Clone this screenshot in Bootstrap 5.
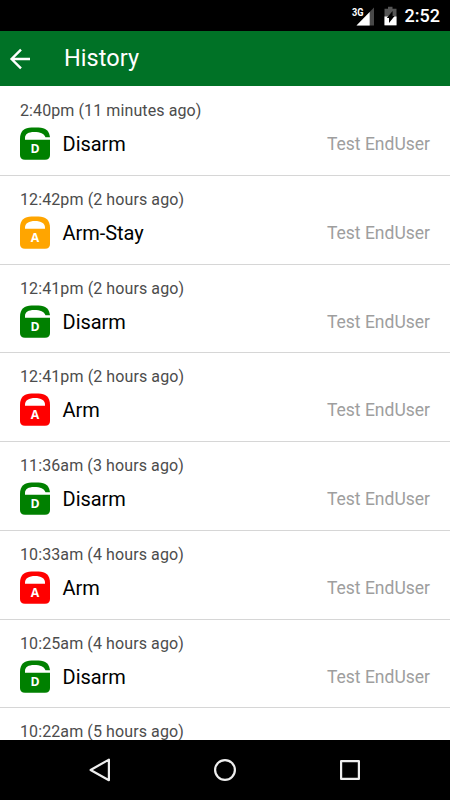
<!DOCTYPE html>
<html lang="en">
<head>
<meta charset="utf-8">
<meta name="viewport" content="width=device-width, initial-scale=1">
<title>History</title>
<link href="https://cdn.jsdelivr.net/npm/bootstrap@5.3.0/dist/css/bootstrap.min.css" rel="stylesheet">
<style>
body { font-family: Roboto, "Liberation Sans", sans-serif; }
svg { display: block; flex: none; }
.status-bar { height: 31px; padding-right: 10px; }
.clock { font-size: 18px; line-height: 33px; font-weight: 500; margin-left: 8px; }
.app-bar { height: 55px; background: #007226; padding-left: 9px; }
.app-title { font-size: 23.5px; line-height: 55px; font-weight: 400; margin-left: 33px; letter-spacing: .05px; }
.history { min-height: 0; padding-top: 1px; }
.entry { height: 88.75px; padding: 14.2px 20px 0; border-bottom: 1.5px solid #d6d6d6; flex: none; }
.entry:last-child { height: auto; border: 0; }
.when { font-size: 16px; line-height: 20px; color: #4c4c4c; letter-spacing: .1px; }
.what { font-size: 20px; line-height: 34.6px; color: #000; margin-left: 12.6px; letter-spacing: -.05px; }
.who { font-size: 17.5px; line-height: 34px; color: #9e9e9e; }
.event-line { margin-top: 6px; }
.nav-keys { height: 60px; }
.nav-keys svg { margin: 0 50.5px; }
</style>
</head>
<body class="vh-100 d-flex flex-column overflow-hidden bg-white">
<header class="flex-shrink-0 text-white">
  <div class="status-bar bg-black d-flex justify-content-end align-items-center">
    <svg width="24" height="20" viewBox="0 0 24 20"><path d="M23 1.5V19.5H5.5Z" fill="#484848"/><path d="M18.7 6V19.5H5.5Z" fill="#fff"/><path d="M0 0H12.5V10H0Z"/><text x="1" y="9.5" font-size="10" font-weight="700" fill="#fff" textLength="11.5" lengthAdjust="spacingAndGlyphs">3G</text></svg>
    <svg width="14" height="20" viewBox="0 0 14 20" class="ms-2"><path d="M5 .8h4.5v2H13.5v16.5H1.5V2.8H5Z" fill="#555"/><path d="M1.5 10.5h12v8.8h-12Z" fill="#fff"/><path d="M9.6 5v5h2L6 17v-5H3.8Z" fill="#000"/></svg>
    <span class="clock">2:52</span>
  </div>
  <div class="app-bar d-flex align-items-center">
    <svg width="22" height="22" viewBox="0 0 22 22" fill="none" stroke="#fff" stroke-width="2.4"><path d="M12 1.7 2.6 11l9.4 9.3M2.4 11H21"/></svg>
    <h1 class="app-title mb-0">History</h1>
  </div>
</header>
<main class="history flex-grow-1 overflow-hidden d-flex flex-column" id="history"></main>
<footer class="nav-keys bg-black d-flex justify-content-center align-items-center flex-shrink-0">
  <svg width="24" height="24" viewBox="0 0 24 24" fill="none" stroke="#eee" stroke-width="2.2" stroke-linejoin="round"><path d="M20.9 1.6v20.6L2.6 12Z"/></svg>
  <svg width="24" height="24" viewBox="0 0 24 24" fill="none" stroke="#eee" stroke-width="2.2"><circle cx="12" cy="12" r="9.9"/></svg>
  <svg width="24" height="24" viewBox="0 0 24 24" fill="none" stroke="#eee" stroke-width="2.2" stroke-linejoin="round"><rect x="3.1" y="3.1" width="17.8" height="17.8"/></svg>
</footer>
<script src="https://cdn.jsdelivr.net/npm/bootstrap@5.3.0/dist/js/bootstrap.bundle.min.js"></script>
<script>
const events = [
  ["2:40pm (11 minutes ago)", "Disarm"],
  ["12:42pm (2 hours ago)", "Arm-Stay"],
  ["12:41pm (2 hours ago)", "Disarm"],
  ["12:41pm (2 hours ago)", "Arm"],
  ["11:36am (3 hours ago)", "Disarm"],
  ["10:33am (4 hours ago)", "Arm"],
  ["10:25am (4 hours ago)", "Disarm"],
  ["10:22am (5 hours ago)"]
];
const colors = { "Disarm": "#008000", "Arm-Stay": "#ffa500", "Arm": "#ff0000" };
function lockIcon(kind) {
  const open = kind === "Disarm";
  const hole = open
    ? '<path d="M5 12.8V11C5 7 8.5 5 14 5C20.5 5 24 6.5 25.5 10.2H30V12.8H5Z" fill="#fff"/>'
    : '<path d="M5 12.8V11.5C5 7.2 9 5 15 5S25 7.2 25 11.5V12.8Z" fill="#fff"/>';
  return `<svg width="30" height="33" viewBox="0 0 30 33"><path d="M0 11.5C0 4 4.5 .4 11.5 .4H18.5C25.5 .4 30 4 30 11.5V28Q30 32.7 25 32.7H5Q0 32.7 0 28Z" fill="${colors[kind]}"/>${hole}<text x="15" y="26.3" text-anchor="middle" font-size="12.3" font-weight="700" fill="#fff" font-family="Open Sans, sans-serif">${open ? "D" : "A"}</text></svg>`;
}
document.getElementById("history").innerHTML = events.map(([when, what]) => `
  <article class="entry">
    <div class="when">${when}</div>
    ${what ? `<div class="event-line d-flex align-items-start">
      ${lockIcon(what)}
      <span class="what">${what}</span>
      <span class="who ms-auto">Test EndUser</span>
    </div>` : ""}
  </article>`).join("");
</script>
</body>
</html>
